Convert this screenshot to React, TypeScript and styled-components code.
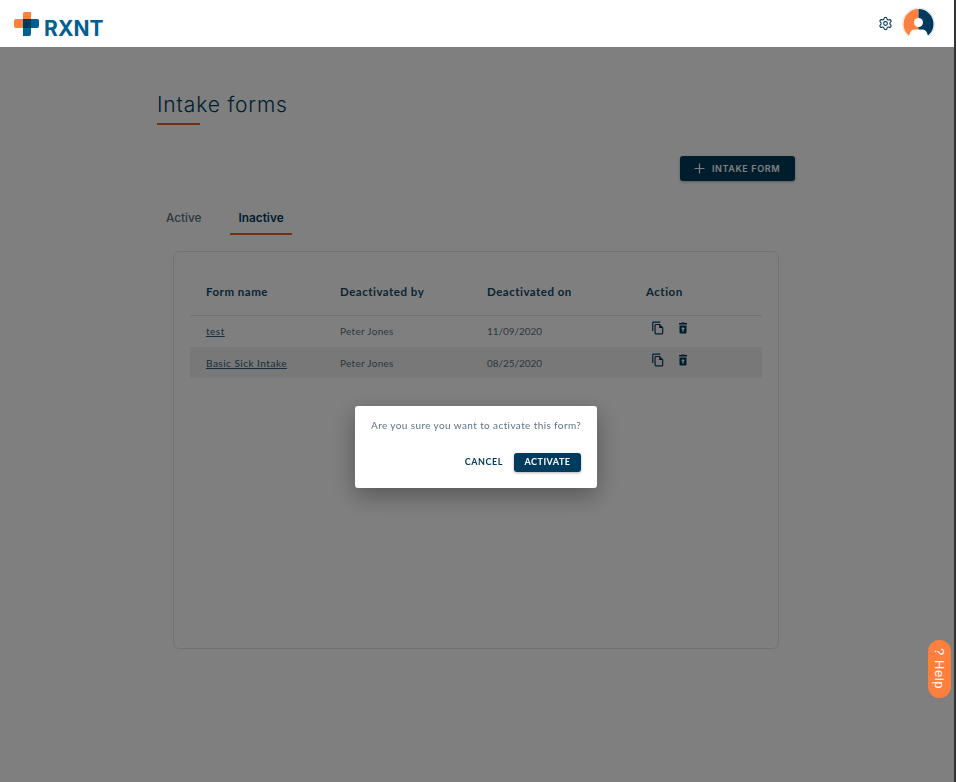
import styled, { createGlobalStyle } from 'styled-components';
import { Settings } from 'lucide-react';

const GlobalStyle = createGlobalStyle`
  html, body {
    margin: 0;
    padding: 0;
    background: #fff;
    height: 100%;
    overflow: hidden;
  }
  * {
    box-sizing: border-box;
  }
`;

const Page = styled.div`
  width: 954px;
  height: 782px;
  font-family: Lato, 'Liberation Sans', sans-serif;
  color: #003a5d;
`;

const Edge = styled.div`
  position: fixed;
  z-index: 40;
  top: 0;
  right: 0;
  bottom: 0;
  width: 2px;
  background: #333;
`;

const Header = styled.header`
  position: relative;
  z-index: 20;
  height: 47px;
  background: #fff;
  display: flex;
  align-items: center;
  justify-content: space-between;
  padding: 0 19px 0 14px;
`;

const Logo = styled.div`
  display: flex;
  align-items: center;
  gap: 5px;
`;

const LogoText = styled.span`
  font-family: Inter, sans-serif;
  font-weight: 700;
  font-size: 21px;
  letter-spacing: 0.1px;
  color: #00608f;
  margin-top: 10px;
`;

const HeaderRight = styled.div`
  display: flex;
  align-items: center;
  gap: 9px;
  color: #003a5d;
`;

const Main = styled.main`
  padding: 45px 0 0 157px;
`;

const Title = styled.h1`
  margin: 0;
  font-family: Inter, sans-serif;
  font-weight: 300;
  font-size: 21px;
  line-height: 25px;
  letter-spacing: 0.85px;
  color: #003a5d;
`;

const TitleRule = styled.div`
  width: 43px;
  height: 2px;
  margin-top: 6px;
  background: #e4632a;
`;

const Toolbar = styled.div`
  display: flex;
  justify-content: flex-end;
  width: 638px;
  margin-top: 31px;
`;

const AddButton = styled.button`
  display: flex;
  align-items: center;
  gap: 7px;
  height: 25px;
  width: 115px;
  padding: 0 0 0 14px;
  border: 0;
  border-radius: 3px;
  background: #003a5d;
  color: #fff;
  font-family: Inter, sans-serif;
  font-weight: 600;
  font-size: 9px;
  letter-spacing: 0.6px;
  box-shadow: 0 1px 3px rgba(0, 0, 0, 0.3);
`;

const Tabs = styled.div`
  display: flex;
  margin-top: 22px;
`;

const Tab = styled.div<{ $active?: boolean }>`
  height: 32px;
  padding: ${(p) => (p.$active ? '0 8px 0 9px' : '0 8px')};
  margin: ${(p) => (p.$active ? '0 0 0 -1px' : '0 21px 0 1px')};
  line-height: 31px;
  font-family: Inter, sans-serif;
  font-weight: ${(p) => (p.$active ? 600 : 500)};
  font-size: 11.8px;
  color: ${(p) => (p.$active ? '#003a5d' : '#557088')};
  border-bottom: 2px solid ${(p) => (p.$active ? '#e4632a' : 'transparent')};
`;

const Card = styled.section`
  width: 606px;
  height: 398px;
  margin: 16px 0 0 16px;
  padding: 24px 16px 0;
  background: #fff;
  border: 1px solid #e2e2e2;
  border-radius: 6px;
`;

const Row = styled.div<{ $shaded?: boolean; $head?: boolean }>`
  display: grid;
  grid-template-columns: 134px 147px 159px 1fr;
  align-items: center;
  height: ${(p) => (p.$head ? '40px' : '31px')};
  padding: ${(p) => (p.$head ? '0 0 8px 16px' : p.$shaded ? '1px 0 0 16px' : '0 0 1px 16px')};
  background: ${(p) => (p.$shaded ? '#f0f0f0' : 'transparent')};
  border-bottom: ${(p) => (p.$head ? '1px solid #e2e2e2' : '0')};
`;

const HeadCell = styled.div`
  font-size: 11.5px;
  font-weight: 700;
  letter-spacing: 0.5px;
  color: #14486a;
`;

const Cell = styled.div`
  font-size: 10px;
  letter-spacing: 0.3px;
  color: #5a6f80;
`;

const DateCell = styled(Cell)`
  letter-spacing: -0.05px;
`;

const FormLink = styled.a`
  font-size: 10px;
  letter-spacing: 0.5px;
  color: #2d5c7c;
  text-decoration: underline;
`;

const Actions = styled.div`
  display: flex;
  align-items: center;
  gap: 12px;
  padding-left: 5px;
  margin-top: -7px;
`;

const Backdrop = styled.div`
  position: fixed;
  inset: 0;
  z-index: 10;
  background: rgba(0, 0, 0, 0.5);
`;

const Dialog = styled.div`
  position: fixed;
  z-index: 15;
  left: 355px;
  top: 406px;
  width: 242px;
  height: 82px;
  padding: 13px 16px 0;
  background: #fff;
  border-radius: 3px;
  box-shadow: 0 8px 24px rgba(0, 0, 0, 0.32);
`;

const DialogText = styled.p`
  margin: 0;
  font-size: 10px;
  line-height: 12px;
  letter-spacing: 0.39px;
  color: #5d7488;
  white-space: nowrap;
`;

const DialogActions = styled.div`
  display: flex;
  justify-content: flex-end;
  align-items: center;
  gap: 11px;
  margin-top: 22px;
`;

const TextButton = styled.button`
  border: 0;
  padding: 0 0 2px;
  background: none;
  font-family: Lato, sans-serif;
  font-weight: 700;
  font-size: 9px;
  letter-spacing: 0.55px;
  color: #003a5d;
`;

const PrimaryButton = styled.button`
  width: 67px;
  height: 19px;
  border: 0;
  padding: 0 0 2px;
  border-radius: 3px;
  background: #003a5d;
  color: #fff;
  font-family: Lato, sans-serif;
  font-weight: 700;
  font-size: 9px;
  letter-spacing: 0.5px;
  box-shadow: 0 1px 3px rgba(0, 0, 0, 0.3);
`;

const HelpTab = styled.button`
  position: fixed;
  z-index: 30;
  left: 928px;
  top: 640px;
  width: 23px;
  height: 58px;
  border: 0;
  padding: 0;
  border-radius: 12px;
  background: #ff7f3f;
  color: #fff;
  font-family: 'Liberation Sans', sans-serif;
  font-size: 13px;
  letter-spacing: 0.6px;
  writing-mode: vertical-rl;
  text-align: center;
`;

const LogoMark = () => (
  <svg width="25" height="24" viewBox="0 0 25 24">
    <path d="M9 7V1.5A1.5 1.5 0 0 1 10.5 0H17v7z" fill="#ff7f3f" />
    <path d="M0 9a2 2 0 0 1 2-2h7v9H2a2 2 0 0 1-2-2z" fill="#ff7f3f" />
    <path d="M17 7h6a2 2 0 0 1 2 2v5a2 2 0 0 1-2 2h-6z" fill="#00608f" />
    <path d="M9 16h8v6a2 2 0 0 1-2 2H9z" fill="#00608f" />
    <rect x="9" y="7" width="8" height="9" fill="#003a5d" />
  </svg>
);

const Avatar = () => (
  <svg width="33" height="34" viewBox="0 0 33 34">
    <circle cx="16.5" cy="17" r="16" fill="#fff" stroke="#e4e4e4" />
    <path d="M16.5 2a15 15 0 0 0 0 30z" fill="#ff7f3f" />
    <path d="M16.5 2a15 15 0 0 1 0 30z" fill="#003a5d" />
    <circle cx="16.5" cy="15.5" r="4.5" fill="#fff" />
    <path d="M5 34l3-8a5 5 0 0 1 5-3.5h7a5 5 0 0 1 5 3.5l3 8z" fill="#fff" />
  </svg>
);

const CopyIcon = () => (
  <svg width="14" height="14" viewBox="0 0 24 24" fill="#003a5d">
    <path d="M16 1H4a2 2 0 0 0-2 2v14h2V3h12V1zm-1 4H8a2 2 0 0 0-2 2v14a2 2 0 0 0 2 2h11a2 2 0 0 0 2-2V11l-6-6zM8 21V7h6v5h5v9H8z" />
  </svg>
);

const TrashIcon = () => (
  <svg width="12" height="12" viewBox="0 0 24 24" fill="#003a5d">
    <path d="M15.5 2l-1-1h-5l-1 1H4v3h16V2h-4.5zM5 7v14a2 2 0 0 0 2 2h10a2 2 0 0 0 2-2V7H5zm7 3 4 4h-2.5v5h-3v-5H8l4-4z" />
  </svg>
);

const PlusIcon = () => (
  <svg width="11" height="11" viewBox="0 0 11 11" stroke="#fff" strokeWidth="1.2">
    <path d="M5.5 0.5v10M0.5 5.5h10" />
  </svg>
);

const rows = [
  { name: 'test', by: 'Peter Jones', on: '11/09/2020' },
  { name: 'Basic Sick Intake', by: 'Peter Jones', on: '08/25/2020' },
];

export default function App() {
  return (
    <Page>
      <GlobalStyle />
      <Header>
        <Logo>
          <LogoMark />
          <LogoText>RXNT</LogoText>
        </Logo>
        <HeaderRight>
          <Settings size={15} strokeWidth={1.7} />
          <Avatar />
        </HeaderRight>
      </Header>
      <Main>
        <Title>Intake forms</Title>
        <TitleRule />
        <Toolbar>
          <AddButton>
            <PlusIcon />
            INTAKE FORM
          </AddButton>
        </Toolbar>
        <Tabs>
          <Tab>Active</Tab>
          <Tab $active>Inactive</Tab>
        </Tabs>
        <Card>
          <Row $head>
            <HeadCell>Form name</HeadCell>
            <HeadCell>Deactivated by</HeadCell>
            <HeadCell>Deactivated on</HeadCell>
            <HeadCell>Action</HeadCell>
          </Row>
          {rows.map((r, i) => (
            <Row key={r.name} $shaded={i === 1}>
              <Cell>
                <FormLink>{r.name}</FormLink>
              </Cell>
              <Cell>{r.by}</Cell>
              <DateCell>{r.on}</DateCell>
              <Actions>
                <CopyIcon />
                <TrashIcon />
              </Actions>
            </Row>
          ))}
        </Card>
      </Main>
      <Backdrop />
      <Dialog>
        <DialogText>Are you sure you want to activate this form?</DialogText>
        <DialogActions>
          <TextButton>CANCEL</TextButton>
          <PrimaryButton>ACTIVATE</PrimaryButton>
        </DialogActions>
      </Dialog>
      <HelpTab>? Help</HelpTab>
      <Edge />
    </Page>
  );
}
